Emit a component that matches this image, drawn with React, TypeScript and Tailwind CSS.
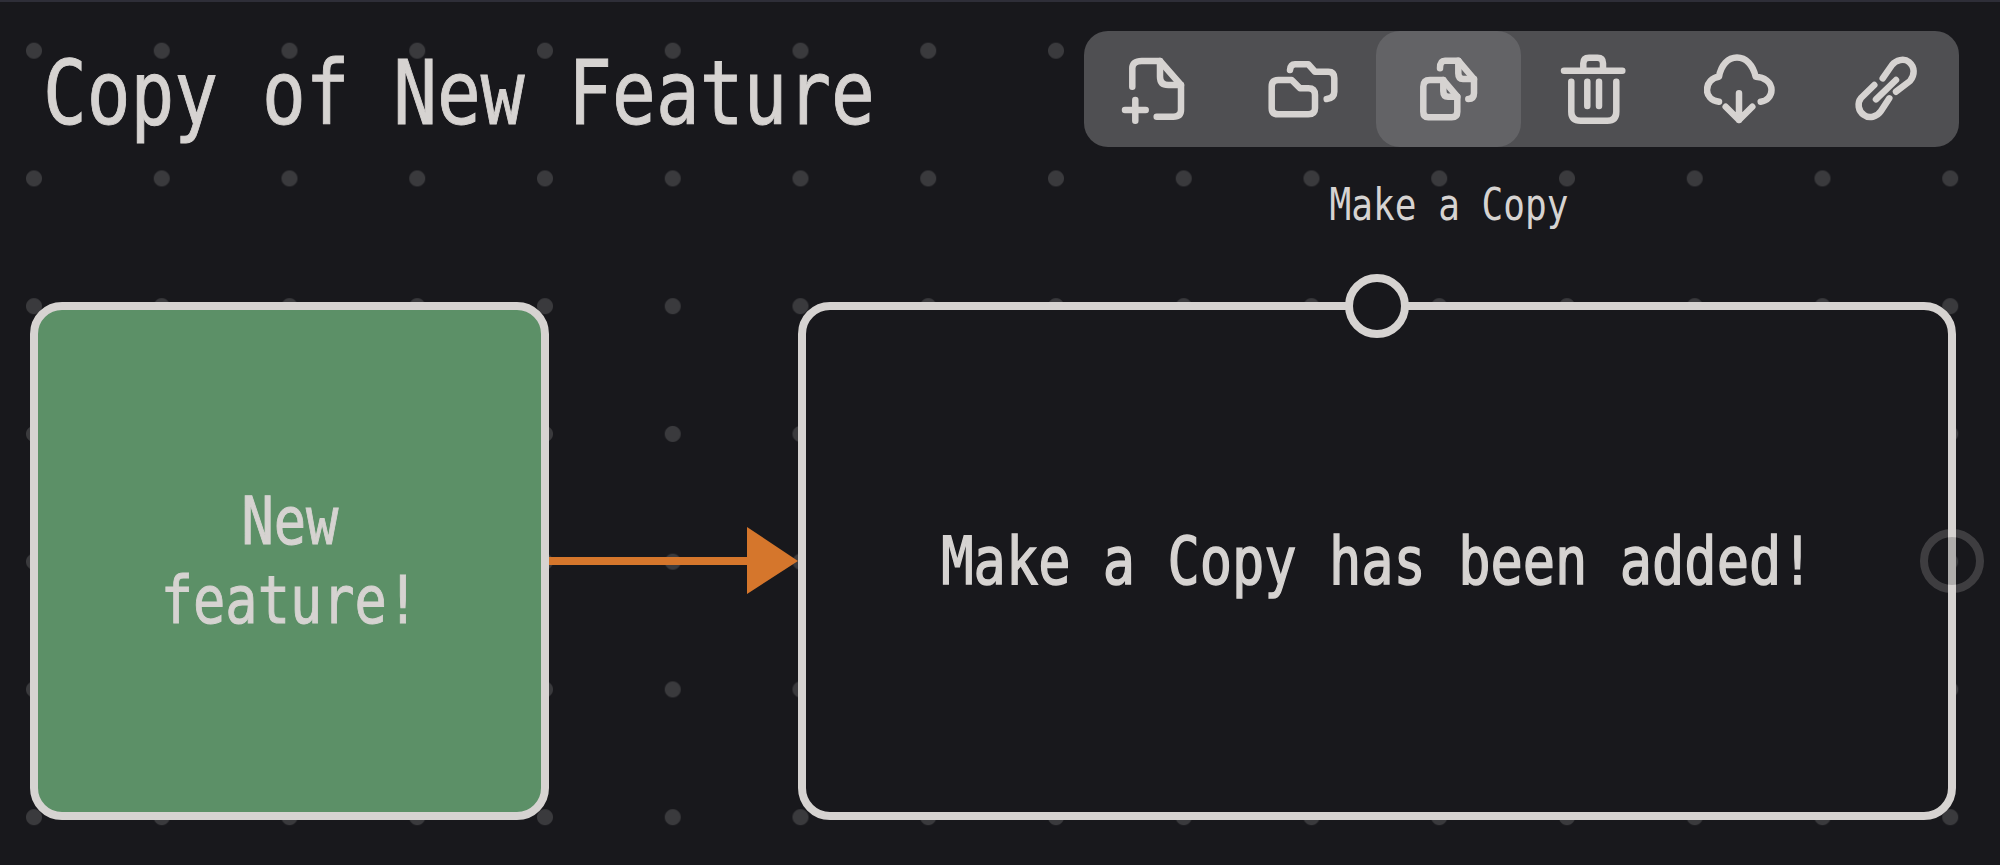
import type { ReactNode } from 'react'

function Icon({ children }: { children: ReactNode }) {
  return (
    <svg
      viewBox="0 0 72 72"
      fill="none"
      stroke="#d6d3d1"
      strokeWidth="6.5"
      strokeLinecap="round"
      strokeLinejoin="round"
      className="w-[72px] h-[72px]"
    >
      {children}
    </svg>
  )
}

const tools = [
  {
    name: 'new',
    icon: (
      <Icon>
        <path d="M11.3 33.7V15.3Q11.3 8 20.7 8H39L60 32V57Q60 63.7 52.3 63.7H35.7" />
        <path d="M39 8V23.7Q39 32 47.3 32H60" />
        <path d="M4 57H24.7M14.3 47V67.7" />
      </Icon>
    ),
  },
  {
    name: 'open',
    icon: (
      <Icon>
        <path d="M11.3 27H24.7L33 35.3H41.3Q48 35.3 48 42V55.3Q48 61.3 41.3 61.3H11.3Q4.7 61.3 4.7 55.3V33.7Q4.7 27 11.3 27Z" />
        <path d="M23 17Q23.5 11.3 28 11.3H41.3L48 18.7H61.3Q67.3 18.7 67.3 25.3V38.7Q67.3 45 59.7 46" />
      </Icon>
    ),
  },
  {
    name: 'copy',
    active: true,
    icon: (
      <Icon>
        <path d="M30.3 27H17Q10.3 27 10.3 33.7V58.7Q10.3 64.3 15.3 64.3H38.7Q44.3 64.3 44.3 58.7V43.7Z" />
        <path d="M30.3 27V38Q30.3 43.7 35 43.7H44.3" />
        <path d="M27 15.3Q27 7.7 32 7.7H45.3L61 26V40.3Q61 46 55.3 46" />
        <path d="M45.3 7.7V20.3Q45.3 26 50 26H61" />
      </Icon>
    ),
  },
  {
    name: 'delete',
    icon: (
      <Icon>
        <path d="M6 17.7H64.3" />
        <path d="M25.3 17.7V10.3Q25.3 4.7 31 4.7H39.5Q45 4.7 45 10.3V17.7" />
        <path d="M13.3 28.7V58.7Q13.3 67.7 22.7 67.7H49.3Q58.3 67.7 58.3 58.7V28.7" />
        <path d="M29.3 28.7V53M41 28.7V53" />
      </Icon>
    ),
  },
  {
    name: 'download',
    icon: (
      <Icon>
        <path d="M15 48.7C7 47.5 3 42.5 3 37C3 30 8 24.5 15 23.7C17 12 24 4.5 33 4.5C42 4.5 49 12 51.7 23.7C60 24 67.5 29 67.5 37C67.5 43 63 48 56.7 48.7" />
        <path d="M35 40.3V67M21.7 53.7L35 67L48.3 53.7" />
      </Icon>
    ),
  },
  {
    name: 'link',
    icon: (
      <Icon>
        <path d="M32.7 25.3L42 12C46 7 54 5 59 9C65 14 65 22 60 28L46 38.7" />
        <path d="M39.3 45.3L31 58C27 64 19 66 14 62C8 58 7 50 11 45L24.3 32" />
        <path d="M26 46.3L46 27" />
      </Icon>
    ),
  },
]

export default function App() {
  return (
    <div className="relative h-[865px] overflow-hidden border-t-2 border-[#2e2e38] bg-[#18181c] bg-[radial-gradient(circle,#3a3a3d_7.5px,transparent_8.5px)] bg-[size:127.75px_127.75px] bg-[position:-29.9px_-15.2px] font-['DejaVu_Sans_Mono',monospace] text-[#d6d3d1]">
      <div className="flex justify-between pt-[29px] pl-[43px] pr-[41px]">
        <h1 className="h-[116px] shrink-0 origin-left scale-x-[.817] whitespace-nowrap text-[89px] leading-[124px] font-normal [-webkit-text-stroke:1px_#d6d3d1]">
          Copy of New Feature
        </h1>
        <div className="relative flex h-[116px] w-[875px] rounded-[24px] bg-[#4f4f52]">
          {tools.map(t => (
            <button
              key={t.name}
              className={'relative flex flex-1 items-center justify-center rounded-[24px] ' + (t.active ? 'bg-[#636366]' : '')}
            >
              {t.icon}
              {t.active && (
                <span className="absolute top-[146px] left-1/2 -translate-x-1/2 scale-x-[.82] whitespace-nowrap text-[44px] leading-[56px]">
                  Make a Copy
                </span>
              )}
            </button>
          ))}
        </div>
      </div>

      <div className="mt-[155px] flex h-[518px] pl-[30px] pr-[44px]">
        <div className="flex w-[519px] items-center justify-center rounded-[32px] border-8 border-[#d6d3d1] bg-[#5c9067]">
          <p className="scale-x-[.813] text-center text-[66px] leading-[79px] [-webkit-text-stroke:1px_#d6d3d1]">
            New
            <br />
            feature!
          </p>
        </div>

        <svg viewBox="0 0 249 68" className="h-[68px] w-[249px] self-center">
          <path d="M0 30H198V0L249 34L198 67V38H0Z" fill="#d5762c" />
        </svg>

        <div className="relative flex flex-1 items-center justify-center rounded-[32px] border-8 border-[#d6d3d1] bg-[#18181c]">
          <p className="scale-x-[.813] whitespace-nowrap text-[66px] leading-[79px] [-webkit-text-stroke:1.5px_#d6d3d1]">Make a Copy has been added!</p>
          <div className="absolute -top-[36px] left-1/2 h-[64px] w-[64px] -translate-x-1/2 rounded-full border-8 border-[#d6d3d1] bg-[#18181c]" />
          <div className="absolute top-1/2 -right-[36px] h-[64px] w-[64px] -translate-y-1/2 rounded-full border-8 border-[#d6d3d1] bg-[#18181c] opacity-20" />
        </div>
      </div>
    </div>
  )
}
